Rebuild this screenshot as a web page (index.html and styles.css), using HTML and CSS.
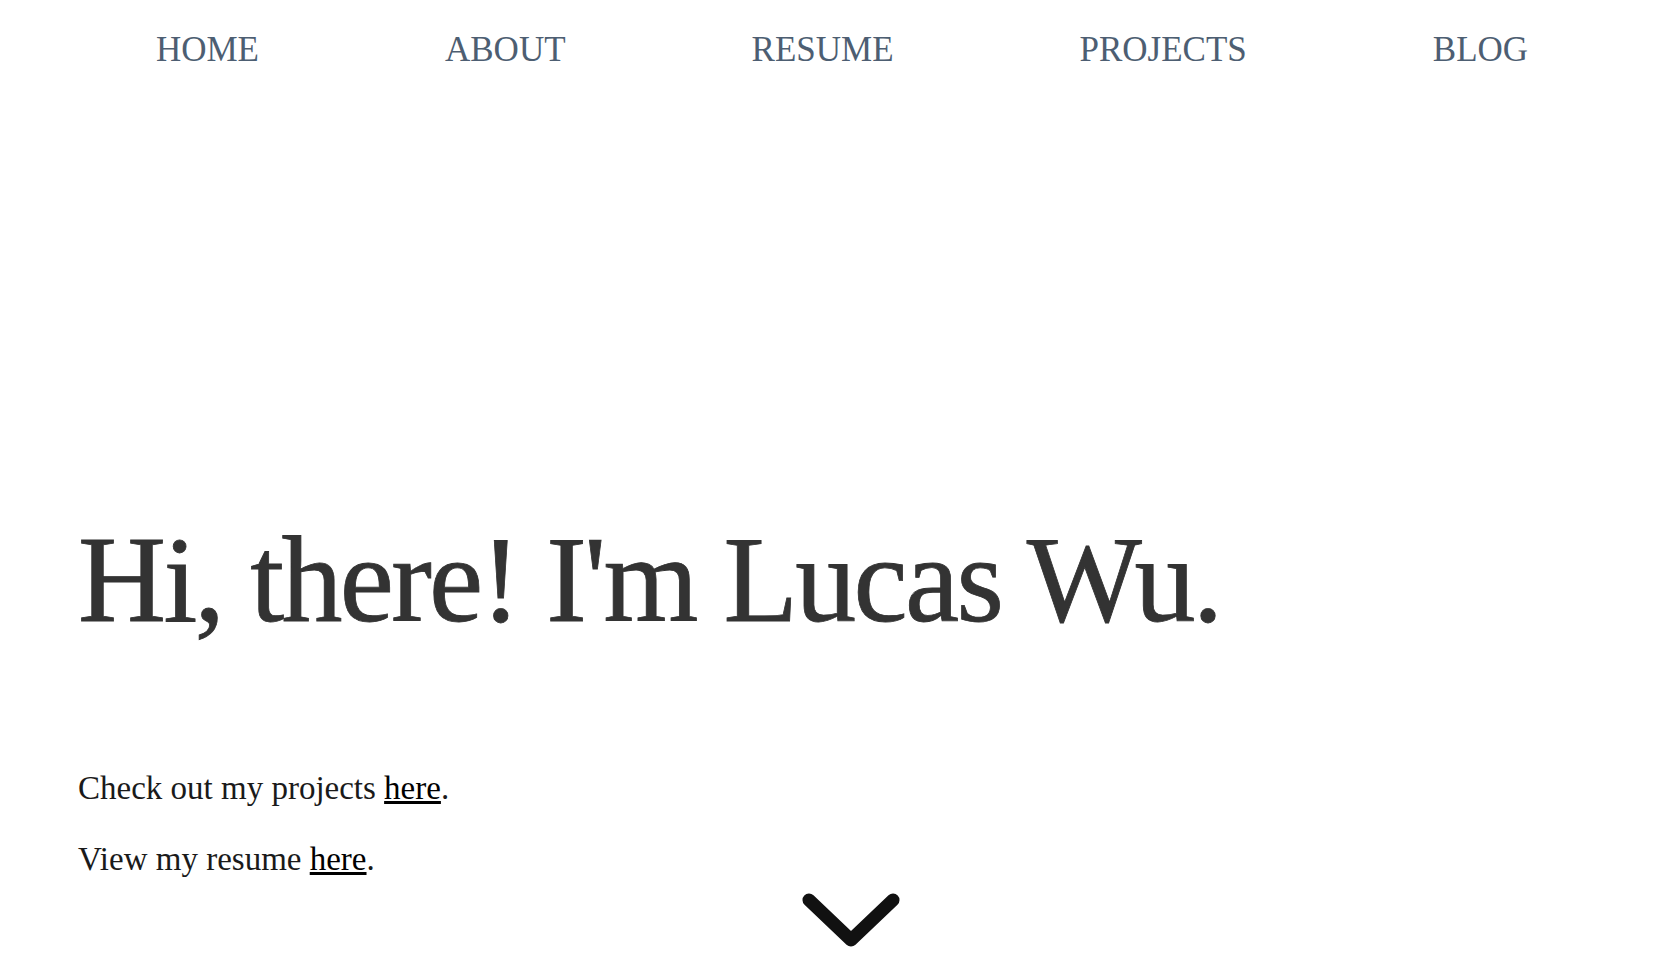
FILE: index.html
```html
<!DOCTYPE html>
<html lang="en">
<head>
<meta charset="utf-8">
<title>Lucas Wu</title>
<link rel="stylesheet" href="styles.css">
</head>
<body>
<nav class="nav">
  <a class="nav-link" href="#">HOME</a>
  <a class="nav-link" href="#">ABOUT</a>
  <a class="nav-link" href="#">RESUME</a>
  <a class="nav-link" href="#">PROJECTS</a>
  <a class="nav-link" href="#">BLOG</a>
</nav>
<main class="hero">
  <h1 class="hero-title">Hi, there! I'm Lucas Wu.</h1>
  <p class="hero-text">Check out my projects <a href="#">here</a>.</p>
  <p class="hero-text">View my resume <a href="#">here</a>.</p>
  <div class="scroll-down">
    <svg width="98" height="56" viewBox="0 0 98 56" aria-hidden="true">
      <path d="M7 7 L49 47 L91 7" fill="none" stroke="#111" stroke-width="13" stroke-linecap="round" stroke-linejoin="round"/>
    </svg>
  </div>
</main>
</body>
</html>
```

FILE: styles.css
```css
html, body {
  margin: 0;
  padding: 0;
  background: #fff;
}

body {
  font-family: "Liberation Serif", "Times New Roman", serif;
  color: #222;
}

.nav {
  display: flex;
  justify-content: center;
  gap: 186px;
  padding: 32px 0 0 10px;
}

.nav-link {
  font-size: 35px;
  line-height: 1;
  color: #4d5e72;
  text-decoration: none;
}

.hero {
  padding: 0 50px 0 78px;
}

.hero-title {
  margin: 452px 0 0;
  font-size: 122px;
  line-height: 1;
  font-weight: normal;
  letter-spacing: -2.7px;
  color: #333;
  -webkit-text-stroke: 0.8px #333;
}

.hero-text {
  margin: 0;
  font-size: 33px;
  line-height: 40px;
  color: #1a1a1a;
}

.hero-title + .hero-text {
  margin-top: 127px;
}

.hero-text + .hero-text {
  margin-top: 31px;
}

.hero-text a {
  color: #000;
  text-decoration: underline;
}

.scroll-down {
  display: flex;
  justify-content: center;
  margin-top: 14px;
}

.scroll-down svg {
  display: block;
}
```
